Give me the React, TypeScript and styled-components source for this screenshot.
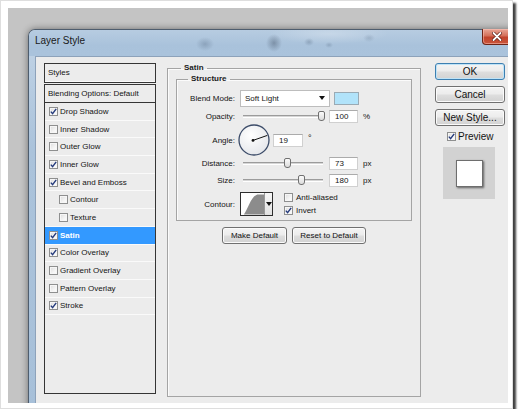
import React from "react";
import styled, { createGlobalStyle } from "styled-components";

const GlobalStyle = createGlobalStyle`
  html, body {
    margin: 0;
    padding: 0;
    background: #ffffff;
  }
  body {
    font-family: "Liberation Sans", Arial, sans-serif;
    color: #141414;
  }
`;

const Frame = styled.div`
  width: 513px;
  height: 409px;
  box-sizing: border-box;
  padding: 7px 4px 5px 7px;
  background: #fff;
  border: 1px solid #dedede;
  box-shadow: 3px 3px 2px rgba(0, 0, 0, 0.75);
`;

const Screen = styled.div`
  width: 500px;
  height: 395px;
  box-sizing: border-box;
  padding: 21px 0 0 20px;
  overflow: hidden;
  background: #c4c4c4;
`;

const Dialog = styled.div`
  width: 492px;
  height: 392px;
  box-sizing: border-box;
  display: flex;
  flex-direction: column;
  padding: 0 6px;
  border: 1px solid #4e5d6e;
  border-bottom: none;
  border-radius: 7px 7px 0 0;
  background: linear-gradient(180deg, #c2d4e6 0%, #abc3db 30%, #a7c0d9 100%);
  box-shadow: 0 0 7px rgba(0, 0, 0, 0.45);
`;

const TitleBar = styled.div`
  height: 26px;
  display: flex;
  align-items: flex-start;
  margin: 0 -6px;
  padding-left: 6px;
  border-radius: 6px 6px 0 0;
  background:
    radial-gradient(ellipse 9px 7px at 176px 14px, rgba(70, 90, 115, 0.3), transparent),
    radial-gradient(ellipse 8px 9px at 245px 13px, rgba(55, 70, 90, 0.4), transparent),
    radial-gradient(ellipse 5px 4px at 280px 12px, rgba(70, 90, 115, 0.3), transparent),
    radial-gradient(ellipse 4px 3px at 300px 15px, rgba(70, 90, 115, 0.25), transparent),
    radial-gradient(ellipse 6px 4px at 340px 8px, rgba(70, 90, 115, 0.2), transparent),
    radial-gradient(ellipse 60px 10px at 300px 4px, rgba(255, 255, 255, 0.25), transparent),
    linear-gradient(180deg, #b7cce1 0%, #a9c2db 60%, #aac3dc 100%);
`;

const Title = styled.span`
  padding-top: 5px;
  font-size: 10px;
  line-height: 12px;
  color: #1a1a1a;
`;

const CloseButton = styled.div`
  margin: -1px 7px 0 auto;
  width: 30px;
  height: 16px;
  box-sizing: border-box;
  display: flex;
  align-items: center;
  justify-content: center;
  border: 1px solid #6e2416;
  border-top: none;
  border-radius: 0 0 4px 4px;
  background: linear-gradient(180deg, #e9a797 0%, #d4705a 45%, #c1432c 55%, #c9553b 100%);
  box-shadow: inset 0 0 0 1px rgba(255, 200, 190, 0.5);
`;

const Body = styled.div`
  flex: 1;
  display: flex;
  align-items: flex-start;
  padding: 6px 0 0 8px;
  background: #ececec;
  border: 1px solid #8da2ba;
  border-bottom: none;
  border-right: none;
`;

/* ---------- left list ---------- */

const LeftCol = styled.div`
  width: 112px;
  margin-right: 11px;
  font-size: 8px;
`;

const StylesHead = styled.div`
  height: 20px;
  box-sizing: border-box;
  padding-left: 3px;
  line-height: 18px;
  border: 1px solid #353535;
  box-shadow: inset 0 -1px 0 #fafafa;
`;

const ListBox = styled.div`
  margin-top: 1px;
  height: 310px;
  box-sizing: border-box;
  border: 1px solid #353535;
`;

const BlendRow = styled.div`
  height: 18px;
  box-sizing: border-box;
  padding-left: 3px;
  line-height: 17px;
  border-bottom: 1px solid #353535;
`;

const Row = styled.div<{ $indent?: boolean; $active?: boolean }>`
  height: 17.7px;
  box-sizing: border-box;
  display: flex;
  align-items: center;
  gap: 2px;
  padding-left: ${({ $indent }) => ($indent ? 14 : 4)}px;
  border-bottom: 1px solid #fafafa;
  background: ${({ $active }) => ($active ? "#3399ff" : "transparent")};
  color: ${({ $active }) => ($active ? "#ffffff" : "#141414")};
  font-weight: ${({ $active }) => ($active ? 700 : 400)};
`;

const Box = styled.span`
  flex: none;
  width: 9px;
  height: 9px;
  box-sizing: border-box;
  display: flex;
  align-items: center;
  justify-content: center;
  border: 1px solid #8e8f8f;
  background: linear-gradient(135deg, #dcdcdc 0%, #f4f4f4 60%, #ffffff 100%);
  box-shadow: inset 0 0 0 1px #f6f6f6;
`;

function Check({ checked }: { checked?: boolean }) {
  return (
    <Box>
      {checked && (
        <svg width="7" height="7" viewBox="0 0 7 7">
          <polyline points="0.8,3.6 2.6,5.7 6.2,0.8" fill="none" stroke="#243a7c" strokeWidth="1.4" />
        </svg>
      )}
    </Box>
  );
}

/* ---------- middle group ---------- */

const Group = styled.fieldset`
  margin: 0 14px 0 0;
  min-width: 0;
  width: 254px;
  height: 334px;
  box-sizing: border-box;
  padding: 0 8px;
  border: 1px solid #a4a4a4;
  box-shadow: inset 1px 1px 0 #fbfbfb;
`;

const InnerGroup = styled.fieldset`
  margin: 1px 0 0;
  min-width: 0;
  padding: 4px 0 2px;
  border: 1px solid #a4a4a4;
  box-shadow: inset 1px 1px 0 #fbfbfb;
`;

const Legend = styled.legend<{ $offset: number }>`
  margin-left: ${({ $offset }) => $offset}px;
  padding: 0 3px;
  font-size: 8px;
  line-height: 10px;
  font-weight: 700;
  color: #1a1a1a;
`;

const FormGrid = styled.div`
  display: grid;
  grid-template-columns: 58px 1fr;
  grid-template-rows: 20px 16px 32px 14px 20px 28px;
  column-gap: 5px;
  align-items: center;
  font-size: 8px;
`;

const Label = styled.span`
  text-align: right;
`;

const Controls = styled.div`
  display: flex;
  align-items: center;
`;

const Select = styled.div`
  width: 90px;
  height: 17px;
  box-sizing: border-box;
  display: flex;
  align-items: center;
  padding: 0 4px;
  background: #fff;
  border: 1px solid #bdbdbd;
`;

const Arrow = styled.span<{ $flush?: boolean }>`
  margin-left: ${({ $flush }) => ($flush ? "0" : "auto")};
  width: 0;
  height: 0;
  border-left: 3px solid transparent;
  border-right: 3px solid transparent;
  border-top: 4px solid #111;
`;

const Swatch = styled.span`
  width: 25px;
  height: 13px;
  box-sizing: border-box;
  margin-left: 4px;
  background: #b1e3fa;
  border: 1px solid #9aaab4;
`;

const Slider = styled.div`
  position: relative;
  width: 80px;
  height: 14px;
  margin-left: 3px;
`;

const Track = styled.div`
  position: absolute;
  left: 0;
  right: 0;
  top: 6px;
  height: 3px;
  box-sizing: border-box;
  border-top: 1px solid #9c9c9c;
  border-bottom: 1px solid #ffffff;
  background: #d6d6d6;
`;

const Thumb = styled.div`
  position: absolute;
  top: 2px;
  width: 7px;
  height: 10px;
  box-sizing: border-box;
  margin-left: -3px;
  border: 1px solid #707070;
  border-radius: 2px 2px 3px 3px;
  background: linear-gradient(180deg, #fbfbfb, #dcdcdc);
`;

const Input = styled.span<{ $w: number; $gap: number }>`
  width: ${({ $w }) => $w}px;
  height: 13px;
  box-sizing: border-box;
  margin-left: ${({ $gap }) => $gap}px;
  padding-left: 5px;
  line-height: 12px;
  background: #fff;
  border: 1px solid #d0d0d0;
  border-top-color: #ababab;
`;

const Unit = styled.span`
  margin-left: 5px;
`;

const Degree = styled.span`
  align-self: flex-start;
  margin: 9px 0 0 5px;
  font-size: 9px;
  line-height: 10px;
`;

const ContourBox = styled.div`
  width: 33px;
  height: 24px;
  box-sizing: border-box;
  display: flex;
  border: 1px solid #2e2e2e;
  background: #fff;
`;

const ContourPick = styled.div`
  flex: none;
  width: 7px;
  display: flex;
  align-items: center;
  justify-content: center;
  border-left: 1px solid #9a9a9a;
  background: linear-gradient(180deg, #f7f7f7, #e2e2e2);
`;

const CheckStack = styled.div`
  margin-left: 11px;
  display: flex;
  flex-direction: column;
  gap: 4px;
`;

const CheckItem = styled.label`
  display: flex;
  align-items: center;
  gap: 3px;
`;

const ButtonRow = styled.div`
  display: flex;
  justify-content: center;
  gap: 5px;
  margin-top: 6px;
`;

const Button = styled.div<{ $w?: number; $small?: boolean; $default?: boolean }>`
  width: ${({ $w }) => ($w ? `${$w}px` : "100%")};
  height: 17px;
  box-sizing: border-box;
  display: flex;
  align-items: center;
  justify-content: center;
  font-size: ${({ $small }) => ($small ? 8 : 10)}px;
  color: #111;
  border: 1px solid ${({ $default }) => ($default ? "#3c7fb1" : "#707070")};
  border-radius: 3px;
  background: linear-gradient(180deg, #f4f4f4 0%, #ececec 48%, #dedede 52%, #d2d2d2 100%);
  box-shadow: inset 0 0 0 1px ${({ $default }) => ($default ? "#bfe3f7" : "#fbfbfb")};
`;

/* ---------- right column ---------- */

const RightCol = styled.div`
  width: 70px;
  display: flex;
  flex-direction: column;
  gap: 6px;
`;

const PreviewToggle = styled.label`
  display: flex;
  align-items: center;
  gap: 2px;
  height: 11px;
  margin-top: -1px;
  padding-left: 12px;
  font-size: 10px;
`;

const PreviewBox = styled.div`
  width: 52px;
  height: 52px;
  margin: -1px 0 0 8px;
  display: flex;
  align-items: center;
  justify-content: center;
  background: #d2d2d2;
`;

const PreviewSwatch = styled.div`
  width: 27px;
  height: 27px;
  box-sizing: border-box;
  background: #fff;
  border: 1px solid #6e6e6e;
  box-shadow: 1px 1px 2px rgba(0, 0, 0, 0.55);
`;

const styleRows = [
  { name: "Drop Shadow", checked: true },
  { name: "Inner Shadow" },
  { name: "Outer Glow" },
  { name: "Inner Glow", checked: true },
  { name: "Bevel and Emboss", checked: true },
  { name: "Contour", indent: true },
  { name: "Texture", indent: true },
  { name: "Satin", checked: true, active: true },
  { name: "Color Overlay", checked: true },
  { name: "Gradient Overlay" },
  { name: "Pattern Overlay" },
  { name: "Stroke", checked: true },
];

function SliderField({ pos, value, unit }: { pos: number; value: string; unit: string }) {
  return (
    <Controls>
      <Slider>
        <Track />
        <Thumb style={{ left: `${pos * 100}%` }} />
      </Slider>
      <Input $w={29} $gap={6}>{value}</Input>
      <Unit>{unit}</Unit>
    </Controls>
  );
}

function AngleDial({ angle }: { angle: number }) {
  const r = 14;
  const a = (angle * Math.PI) / 180;
  const x = 16 + r * Math.cos(a);
  const y = 16 - r * Math.sin(a);
  return (
    <svg width="32" height="32" viewBox="0 0 32 32" style={{ marginLeft: -2 }}>
      <defs>
        <radialGradient id="dialFill" cx="40%" cy="35%" r="70%">
          <stop offset="0%" stopColor="#ffffff" />
          <stop offset="100%" stopColor="#e4e6ea" />
        </radialGradient>
      </defs>
      <circle cx="16" cy="16" r="15" fill="url(#dialFill)" stroke="#3b4b68" strokeWidth="1.3" />
      <line x1="15" y1="16.4" x2={x} y2={y} stroke="#111" strokeWidth="1" />
      <circle cx="15" cy="16.4" r="1.4" fill="#111" />
    </svg>
  );
}

export default function App() {
  return (
    <>
      <GlobalStyle />
      <Frame>
        <Screen>
          <Dialog>
            <TitleBar>
              <Title>Layer Style</Title>
              <CloseButton>
                <svg width="10" height="9" viewBox="0 0 10 9">
                  <path d="M1.5 1 L8.5 8 M8.5 1 L1.5 8" stroke="#5a1a10" strokeWidth="3.2" strokeLinecap="round" />
                  <path d="M1.5 1 L8.5 8 M8.5 1 L1.5 8" stroke="#ffffff" strokeWidth="1.8" strokeLinecap="round" />
                </svg>
              </CloseButton>
            </TitleBar>
            <Body>
              <LeftCol>
                <StylesHead>Styles</StylesHead>
                <ListBox>
                  <BlendRow>Blending Options: Default</BlendRow>
                  {styleRows.map((r) => (
                    <Row key={r.name} $indent={r.indent} $active={r.active}>
                      <Check checked={r.checked} />
                      {r.name}
                    </Row>
                  ))}
                </ListBox>
              </LeftCol>

              <Group>
                <Legend $offset={5}>Satin</Legend>
                <InnerGroup>
                  <Legend $offset={11}>Structure</Legend>
                  <FormGrid>
                    <Label>Blend Mode:</Label>
                    <Controls>
                      <Select>
                        Soft Light
                        <Arrow />
                      </Select>
                      <Swatch />
                    </Controls>

                    <Label>Opacity:</Label>
                    <SliderField pos={0.975} value="100" unit="%" />

                    <Label>Angle:</Label>
                    <Controls>
                      <AngleDial angle={19} />
                      <Input $w={30} $gap={3}>19</Input>
                      <Degree>°</Degree>
                    </Controls>

                    <Label>Distance:</Label>
                    <SliderField pos={0.55} value="73" unit="px" />

                    <Label>Size:</Label>
                    <SliderField pos={0.725} value="180" unit="px" />

                    <Label>Contour:</Label>
                    <Controls>
                      <ContourBox>
                        <svg width="24" height="22" viewBox="0 0 24 22">
                          <path d="M3 22 C 8 15, 10 4, 17 1 L 24 1 L 24 22 Z" fill="#8c8c8c" />
                        </svg>
                        <ContourPick>
                          <Arrow $flush />
                        </ContourPick>
                      </ContourBox>
                      <CheckStack>
                        <CheckItem>
                          <Check />
                          Anti-aliased
                        </CheckItem>
                        <CheckItem>
                          <Check checked />
                          Invert
                        </CheckItem>
                      </CheckStack>
                    </Controls>
                  </FormGrid>
                </InnerGroup>
                <ButtonRow>
                  <Button $w={65} $small>Make Default</Button>
                  <Button $w={74} $small>Reset to Default</Button>
                </ButtonRow>
              </Group>

              <RightCol>
                <Button $default>OK</Button>
                <Button>Cancel</Button>
                <Button>New Style...</Button>
                <PreviewToggle>
                  <Check checked />
                  Preview
                </PreviewToggle>
                <PreviewBox>
                  <PreviewSwatch />
                </PreviewBox>
              </RightCol>
            </Body>
          </Dialog>
        </Screen>
      </Frame>
    </>
  );
}
